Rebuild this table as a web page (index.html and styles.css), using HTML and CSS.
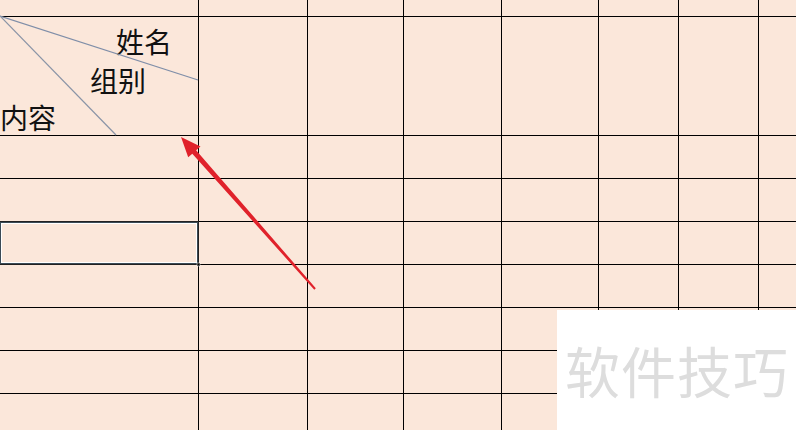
FILE: index.html
```html
<!DOCTYPE html>
<html lang="zh">
<head>
<meta charset="utf-8">
<link rel="stylesheet" href="styles.css">
</head>
<body>
<div class="sheet">
  <div class="grid">
    <div class="c"></div><div class="c"></div><div class="c"></div><div class="c"></div><div class="c"></div><div class="c"></div><div class="c"></div><div class="c"></div>
    <div class="c head">
      <span class="lbl l1">姓名</span>
      <span class="lbl l2">组别</span>
      <span class="lbl l3">内容</span>
    </div><div class="c"></div><div class="c"></div><div class="c"></div><div class="c"></div><div class="c"></div><div class="c"></div><div class="c"></div>
    <div class="c"></div><div class="c"></div><div class="c"></div><div class="c"></div><div class="c"></div><div class="c"></div><div class="c"></div><div class="c"></div>
    <div class="c"></div><div class="c"></div><div class="c"></div><div class="c"></div><div class="c"></div><div class="c"></div><div class="c"></div><div class="c"></div>
    <div class="c sel"></div><div class="c"></div><div class="c"></div><div class="c"></div><div class="c"></div><div class="c"></div><div class="c"></div><div class="c"></div>
    <div class="c"></div><div class="c"></div><div class="c"></div><div class="c"></div><div class="c"></div><div class="c"></div><div class="c"></div><div class="c"></div>
    <div class="c"></div><div class="c"></div><div class="c"></div><div class="c"></div><div class="c"></div><div class="c"></div><div class="c"></div><div class="c"></div>
    <div class="c"></div><div class="c"></div><div class="c"></div><div class="c"></div><div class="c"></div><div class="c"></div><div class="c"></div><div class="c"></div>
    <div class="c"></div><div class="c"></div><div class="c"></div><div class="c"></div><div class="c"></div><div class="c"></div><div class="c"></div><div class="c"></div>
  </div>
  <svg class="overlay" width="796" height="430" viewBox="0 0 796 430">
    <line x1="0" y1="16" x2="198" y2="80" stroke="#7f8ea8" stroke-width="1.2"/>
    <line x1="0" y1="16" x2="116" y2="135" stroke="#8a94a6" stroke-width="1.2"/>
    <rect x="197" y="263" width="3" height="3" fill="#000" stroke="#fff" stroke-width="0.5"/>
    <polygon fill="#e0222b" points="181,137 200.5,146.5 196.1,150.3 315.8,288.3 314.3,289.7 192.3,153.7 188.2,157.3"/>
  </svg>
  <div class="wm">软件技巧</div>
</div>
</body>
</html>
```
FILE: styles.css
```css
html, body {
  margin: 0;
  padding: 0;
  background: #fbe7da;
}
.sheet {
  position: relative;
  width: 796px;
  height: 430px;
  overflow: hidden;
  font-family: "Noto Sans CJK SC", "Noto Sans", sans-serif;
}
.grid {
  display: grid;
  grid-template-columns: 198px 108px 95px 97px 96px 79px 79px 1fr;
  grid-template-rows: 16px 118px 42px 42px 42px 42px 42px 42px 1fr;
  gap: 1px;
  background: #000;
  width: 796px;
  height: 430px;
}
.c {
  background: #fbe7da;
  position: relative;
}
.head .lbl {
  position: absolute;
  font-size: 28px;
  line-height: 1;
  color: #111;
  font-weight: 400;
  white-space: nowrap;
}
.l1 { left: 116px; top: 10px; }
.l2 { left: 90px; top: 49px; }
.l3 { left: 0; top: 86px; }
.sel {
  box-shadow: inset 0 0 0 1px #3a4a55, inset 0 0 0 2px #fff;
  outline: 1px solid #222;
}
.overlay {
  position: absolute;
  left: 0;
  top: 0;
}
.wm {
  position: absolute;
  left: 557px;
  top: 310px;
  width: 239px;
  height: 120px;
  background: #fff;
  color: #dddddd;
  font-size: 55px;
  line-height: 1;
  padding: 32px 0 0 8px;
  box-sizing: border-box;
  letter-spacing: 1px;
  white-space: nowrap;
}
```
